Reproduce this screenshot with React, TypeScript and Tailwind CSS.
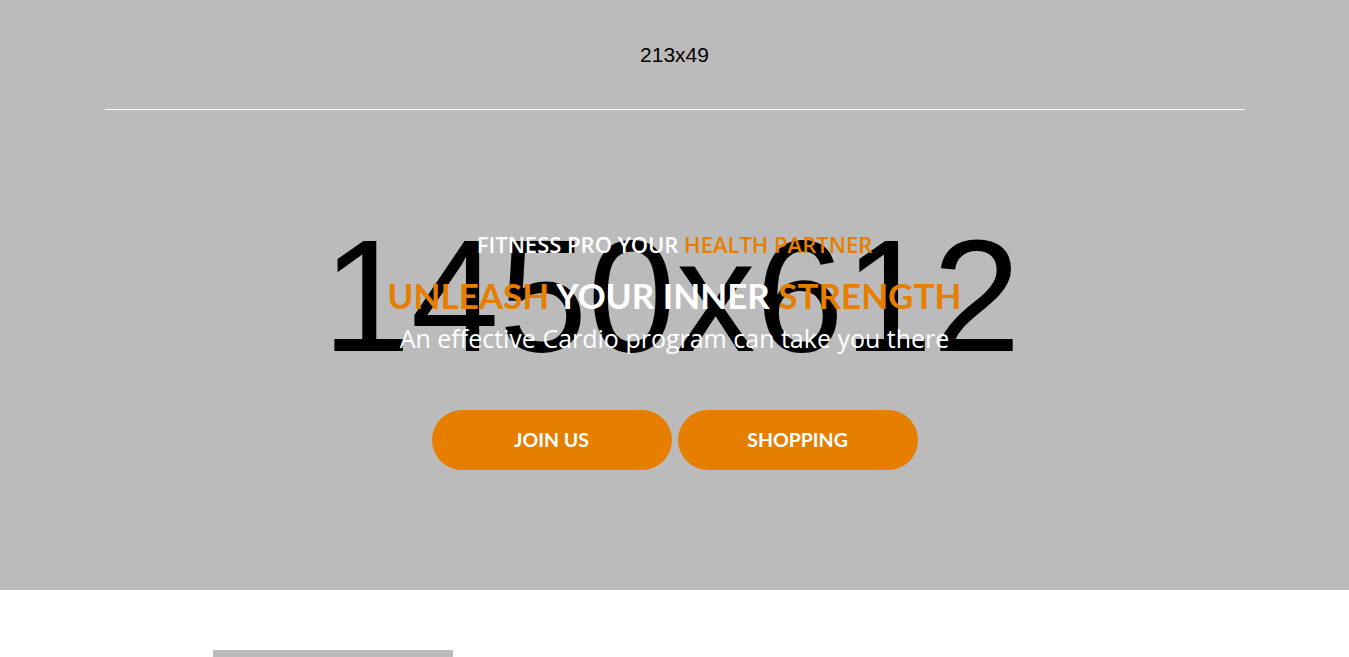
const Hero = () => {
  return (
    <section className="relative h-[590px] overflow-hidden bg-[#bbbbbb]">
      {/* placeholder image text */}
      <div className="absolute inset-0 flex items-center justify-center pr-[6px] pt-[2px] font-['Liberation_Sans',Arial,sans-serif] text-[159px] leading-none text-black">
        1450x612
      </div>

      <div className="relative">
        {/* Header */}
        <div className="mx-auto w-[1140px] border-b border-white pt-[30px] pb-[30px]">
          <div className="mx-auto flex h-[49px] w-[213px] items-center justify-center font-['Liberation_Sans',Arial,sans-serif] text-[21px] text-black">
            213x49
          </div>
        </div>

        {/* Banner text */}
        <div className="mt-[120px] text-center">
          <h4 className="font-['Open_Sans',sans-serif] text-[22px] font-semibold leading-[28px] text-white">
            FITNESS PRO YOUR <span className="text-[#e67e00]">HEALTH PARTNER</span>
          </h4>
          <h1 className="mt-[15px] font-['Lato',sans-serif] text-[35px] font-bold leading-[44px] text-white">
            <span className="text-[#e67e00]">UNLEASH</span> YOUR INNER{" "}
            <span className="text-[#e67e00]">STRENGTH</span>
          </h1>
          <p className="font-['Open_Sans',sans-serif] text-[25px] leading-[42px] text-white">
            An effective Cardio program can take you there
          </p>
          <div className="mt-[51px] flex justify-center gap-[6px]">
            <button className="h-[60px] w-[240px] rounded-full bg-[#e67e00] font-['Lato',sans-serif] text-[19.5px] font-bold text-white">
              JOIN US
            </button>
            <button className="h-[60px] w-[240px] rounded-full bg-[#e67e00] font-['Lato',sans-serif] text-[19.5px] font-bold text-white">
              SHOPPING
            </button>
          </div>
        </div>
      </div>
    </section>
  );
};

export default function App() {
  return (
    <div className="min-h-screen bg-white">
      <Hero />
      <section className="pt-[60px]">
        <div className="mx-auto w-[1140px]">
          <div className="ml-[108px] h-[240px] w-[240px] bg-[#bbbbbb]" />
        </div>
      </section>
    </div>
  );
}
